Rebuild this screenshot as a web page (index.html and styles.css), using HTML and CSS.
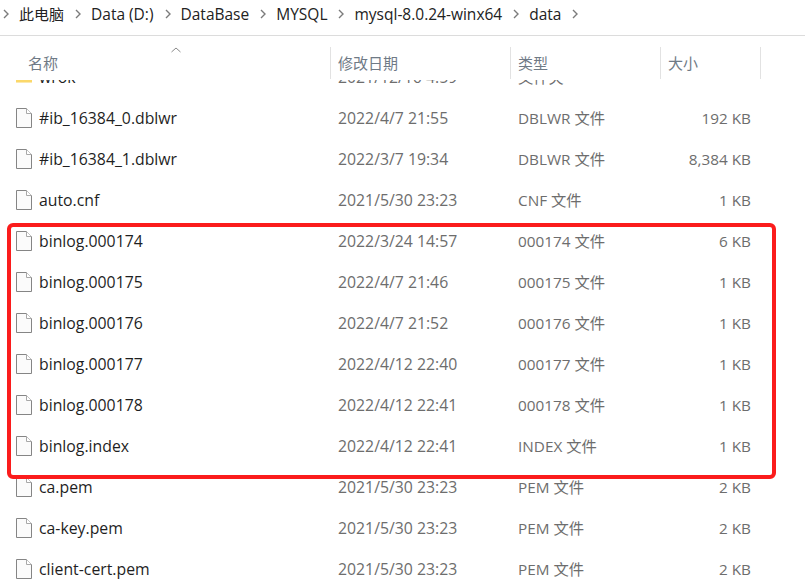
FILE: index.html
```html
<!DOCTYPE html>
<html lang="zh-CN">
<head>
<meta charset="utf-8">
<title>data</title>
<link rel="stylesheet" href="styles.css">
</head>
<body>
<svg class="defs" width="0" height="0" aria-hidden="true">
  <symbol id="file" viewBox="0 0 16 20">
    <path d="M.5 .5H10.500L15.500 5.500V19.500H.5Z" fill="#fbfbfb" stroke="#858585" stroke-width="1"/>
    <path d="M10.500 .5V5.500H15.500" fill="#fff" stroke="#a8a8a8" stroke-width="1"/>
  </symbol>
  <symbol id="chev" viewBox="0 0 6 10">
    <path d="M1 1L5 5L1 9" fill="none" stroke="#7b7b7b" stroke-width="1.4"/>
  </symbol>
</svg>
<nav class="crumbs">
  <svg class="chev first"><use href="#chev"/></svg><span class="pc">此电脑</span>
  <svg class="chev"><use href="#chev"/></svg><span>Data (D:)</span>
  <svg class="chev"><use href="#chev"/></svg><span>DataBase</span>
  <svg class="chev"><use href="#chev"/></svg><span>MYSQL</span>
  <svg class="chev"><use href="#chev"/></svg><span>mysql-8.0.24-winx64</span>
  <svg class="chev"><use href="#chev"/></svg><span>data</span>
  <svg class="chev"><use href="#chev"/></svg>
</nav>
<header class="head">
  <svg class="sort" viewBox="0 0 10 6"><path d="M.5 5L5 1L9.500 5" fill="none" stroke="#8a8a8a" stroke-width="1"/></svg>
  <div class="hcell hname">名称</div>
  <div class="hcell hdate">修改日期</div>
  <div class="hcell htype">类型</div>
  <div class="hcell hsize">大小</div>
</header>
<main class="list">
  <div class="rows">
    <div class="row clipped">
      <svg class="icon" viewBox="0 0 18 20"><path d="M0 2H7L9 4H18V16H0Z" fill="#f7c948"/><path d="M0 12H18V16H0Z" fill="#fbd86a"/></svg>
      <span class="name">wrok</span><span class="date">2021/12/16 4:59</span><span class="type">文件夹</span><span class="size"></span>
    </div>
    <div class="row"><svg class="icon"><use href="#file"/></svg><span class="name">#ib_16384_0.dblwr</span><span class="date">2022/4/7 21:55</span><span class="type">DBLWR 文件</span><span class="size">192 KB</span></div>
    <div class="row"><svg class="icon"><use href="#file"/></svg><span class="name">#ib_16384_1.dblwr</span><span class="date">2022/3/7 19:34</span><span class="type">DBLWR 文件</span><span class="size">8,384 KB</span></div>
    <div class="row"><svg class="icon"><use href="#file"/></svg><span class="name">auto.cnf</span><span class="date">2021/5/30 23:23</span><span class="type">CNF 文件</span><span class="size">1 KB</span></div>
    <div class="row"><svg class="icon"><use href="#file"/></svg><span class="name">binlog.000174</span><span class="date">2022/3/24 14:57</span><span class="type">000174 文件</span><span class="size">6 KB</span></div>
    <div class="row"><svg class="icon"><use href="#file"/></svg><span class="name">binlog.000175</span><span class="date">2022/4/7 21:46</span><span class="type">000175 文件</span><span class="size">1 KB</span></div>
    <div class="row"><svg class="icon"><use href="#file"/></svg><span class="name">binlog.000176</span><span class="date">2022/4/7 21:52</span><span class="type">000176 文件</span><span class="size">1 KB</span></div>
    <div class="row"><svg class="icon"><use href="#file"/></svg><span class="name">binlog.000177</span><span class="date">2022/4/12 22:40</span><span class="type">000177 文件</span><span class="size">1 KB</span></div>
    <div class="row"><svg class="icon"><use href="#file"/></svg><span class="name">binlog.000178</span><span class="date">2022/4/12 22:41</span><span class="type">000178 文件</span><span class="size">1 KB</span></div>
    <div class="row"><svg class="icon"><use href="#file"/></svg><span class="name">binlog.index</span><span class="date">2022/4/12 22:41</span><span class="type">INDEX 文件</span><span class="size">1 KB</span></div>
    <div class="row"><svg class="icon"><use href="#file"/></svg><span class="name">ca.pem</span><span class="date">2021/5/30 23:23</span><span class="type">PEM 文件</span><span class="size">2 KB</span></div>
    <div class="row"><svg class="icon"><use href="#file"/></svg><span class="name">ca-key.pem</span><span class="date">2021/5/30 23:23</span><span class="type">PEM 文件</span><span class="size">2 KB</span></div>
    <div class="row"><svg class="icon"><use href="#file"/></svg><span class="name">client-cert.pem</span><span class="date">2021/5/30 23:23</span><span class="type">PEM 文件</span><span class="size">2 KB</span></div>
  </div>
</main>
<div class="highlight"></div>
</body>
</html>
```
FILE: styles.css
```css
* { box-sizing: border-box; }
html, body { height: 100%; }
body {
  margin: 0;
  width: 805px;
  height: 585px;
  overflow: hidden;
  background: #fff;
  display: flex;
  flex-direction: column;
  font-family: "Open Sans", "Noto Sans CJK SC", sans-serif;
  font-size: 15.5px;
  color: #6d6d6d;
}
.defs { position: absolute; }
.crumbs {
  height: 36px;
  flex: none;
  display: flex;
  align-items: center;
  padding: 0 0 8px 3px;
  border-bottom: 1px solid #dcdcdc;
  color: #222;
}
.pc { font-size: 15px; }
.chev { width: 6px; height: 10px; flex: none; margin: 0 10px 0 11px; }
.chev.first { margin: 0 10px 0 0; }
.head {
  position: relative;
  height: 44px;
  flex: none;
  padding: 11px 0 1px;
  display: flex;
  background: #fff;
  z-index: 1;
  color: #6f7a86;
  font-size: 15px;
}
.sort { position: absolute; left: 171px; top: 11px; width: 10px; height: 6px; }
.hcell {
  height: 32px;
  padding-top: 5px;
  border-right: 1px solid #e2e2e2;
  flex: none;
}
.hname { width: 331px; padding-left: 28px; }
.hdate { width: 180px; padding-left: 7px; }
.htype { width: 150px; padding-left: 7px; }
.hsize { width: 100px; padding-left: 7px; }
.list { flex: 1; min-height: 0; overflow: hidden; }
.rows { margin-top: -24px; }
.row {
  height: 41px;
  display: grid;
  grid-template-columns: 17px 304px 180px 150px 83px;
  align-items: center;
  padding-left: 17px;
  white-space: nowrap;
  line-height: 20px;
}
.icon { width: 16px; height: 20px; margin-left: -1px; }
.name { color: #1f1f1f; padding-left: 5px; font-size: 15.8px; }
.date { font-size: 15.8px; }
.type { font-size: 15.3px; }
.size { text-align: right; font-size: 15.3px; }
.highlight {
  position: absolute;
  left: 7px;
  top: 223px;
  width: 769px;
  height: 256px;
  border: 4px solid #fb1c1c;
  border-radius: 6px;
}
```
